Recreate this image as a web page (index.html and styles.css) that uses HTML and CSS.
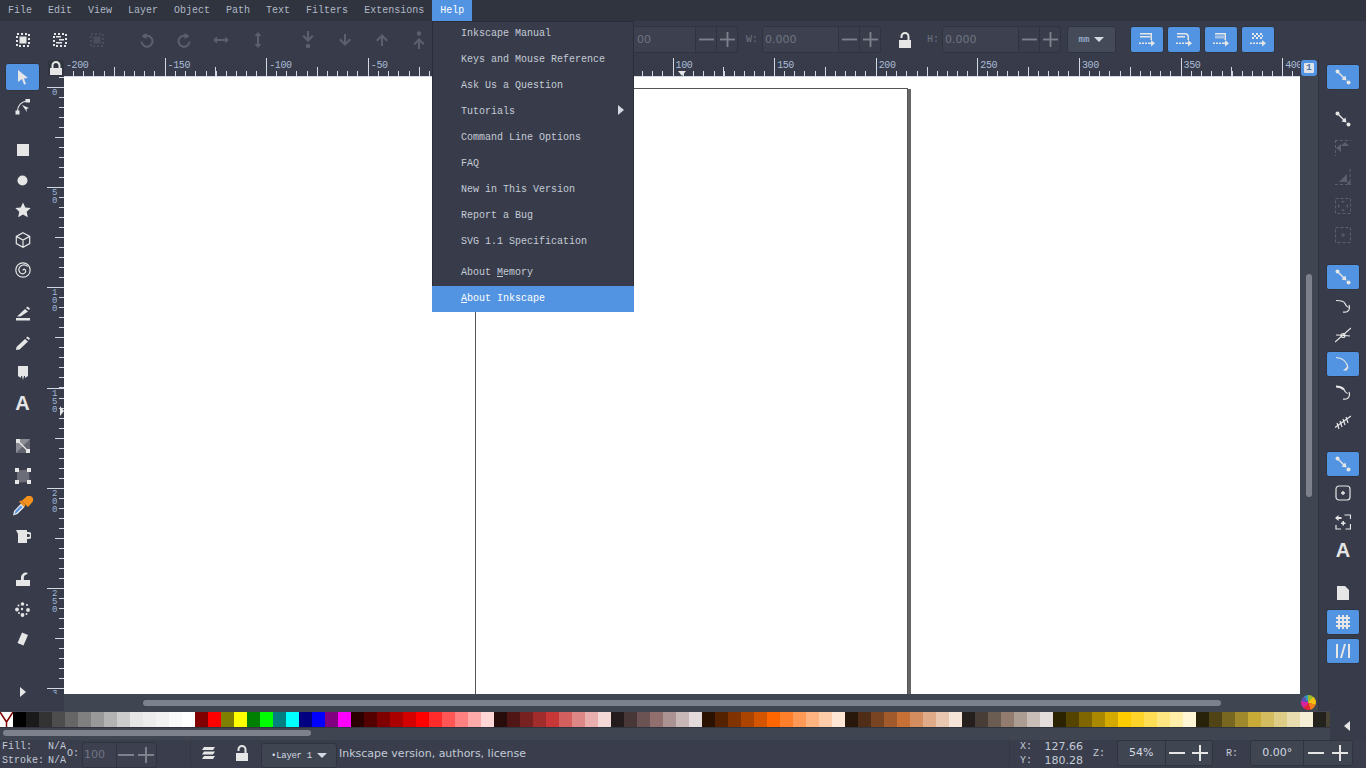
FILE: index.html
```html
<!DOCTYPE html>
<html lang="en">
<head>
  <meta charset="UTF-8">
  <title>Inkscape</title>
  <link rel="stylesheet" href="styles.css">
</head>
<body>
  <svg class="defs" width="0" height="0">
    <symbol id="minus" viewBox="0 0 16 16"><rect x="0" y="7" width="16" height="2"/></symbol>
    <symbol id="plus" viewBox="0 0 16 16"><rect x="0" y="7" width="16" height="2"/><rect x="7" y="0" width="2" height="16"/></symbol>
    <symbol id="lock-open" viewBox="0 0 16 16"><path d="M2 8h12v8H2zM10.500 8V4.500a2.500 2.500 0 0 0-5 0V6h-2V4.500a4.500 4.500 0 0 1 9 0V8z"/></symbol>
    <symbol id="snap-line" viewBox="0 0 16 16"><circle cx="2.500" cy="2.500" r="2"/><circle cx="13.500" cy="13.500" r="2"/><path d="M2 3l1-1 6 6 1.500-1.500 1 5-5-1L8 9z"/></symbol>
  </svg>

  <nav class="menubar">
    <span class="menu-title">File</span>
    <span class="menu-title">Edit</span>
    <span class="menu-title">View</span>
    <span class="menu-title">Layer</span>
    <span class="menu-title">Object</span>
    <span class="menu-title">Path</span>
    <span class="menu-title">Text</span>
    <span class="menu-title">Filters</span>
    <span class="menu-title">Extensions</span>
    <span class="menu-title menu-open">Help</span>
  </nav>

  <div class="menu">
    <div class="menu-item">Inkscape Manual</div>
    <div class="menu-item">Keys and Mouse Reference</div>
    <div class="menu-item">Ask Us a Question</div>
    <div class="menu-item">Tutorials<span class="submenu-arrow"></span></div>
    <div class="menu-item">Command Line Options</div>
    <div class="menu-item">FAQ</div>
    <div class="menu-item">New in This Version</div>
    <div class="menu-item">Report a Bug</div>
    <div class="menu-item">SVG 1.1 Specification</div>
    <div class="menu-sep"></div>
    <div class="menu-item">About <u>M</u>emory</div>
    <div class="menu-item menu-active"><u>A</u>bout Inkscape</div>
  </div>

  <header class="toolbar">
    <span class="cmd"><svg width="16" height="16" viewBox="0 0 16 16"><rect x="2" y="2" width="12" height="12" class="dots"/><rect x="4.500" y="4.500" width="7" height="7"/></svg></span>
    <span class="cmd"><svg width="16" height="16" viewBox="0 0 16 16"><rect x="2" y="2" width="12" height="12" class="dots"/><path d="M4 4h5v1.500H4zM7 7h5v1.500H7zM4 10h6v1.500H4z"/></svg></span>
    <span class="cmd off"><svg width="16" height="16" viewBox="0 0 16 16"><rect x="2" y="2" width="12" height="12" class="dots"/><rect x="4.500" y="4.500" width="7" height="7"/></svg></span>
    <span class="cmd off gap"><svg width="16" height="16" viewBox="0 0 16 16"><path d="M4.200 5.200A5.500 5.500 0 1 1 2.500 9.500" class="line"/><path d="M7.500 1v6L2.500 4z"/></svg></span>
    <span class="cmd off"><svg width="16" height="16" viewBox="0 0 16 16"><path d="M11.800 5.200A5.500 5.500 0 1 0 13.500 9.500" class="line"/><path d="M8.500 1v6l5-3z"/></svg></span>
    <span class="cmd off"><svg width="16" height="16" viewBox="0 0 16 16"><path d="M0 8l4-3.500v2.500h8V4.500L16 8l-4 3.500V9H4v2.500z"/></svg></span>
    <span class="cmd off"><svg width="16" height="16" viewBox="0 0 16 16"><path d="M8 0l3.500 4H9v8h2.500L8 16l-3.500-4H7V4H4.500z"/></svg></span>
    <span class="cmd off gap"><svg width="16" height="18" viewBox="0 0 16 18"><path d="M7 0h2v7l3-3 1.500 1.500L8 11 2.500 5.500 4 4l3 3z"/><circle cx="8" cy="15" r="2.200"/></svg></span>
    <span class="cmd off"><svg width="16" height="16" viewBox="0 0 16 16"><path d="M7 2h2v8l3.500-3.500L14 8l-6 6-6-6 1.500-1.500L7 10z"/></svg></span>
    <span class="cmd off"><svg width="16" height="16" viewBox="0 0 16 16"><path d="M7 14h2V6l3.500 3.500L14 8 8 2 2 8l1.500 1.500L7 6z"/></svg></span>
    <span class="cmd off"><svg width="16" height="18" viewBox="0 0 16 18"><circle cx="8" cy="2.500" r="2.200"/><path d="M7 18h2v-7l3 3 1.500-1.500L8 7l-5.500 5.500L4 14l3-3z"/></svg></span>

    <div class="spin-group first"><span class="spin-label"></span><span class="spin-field"></span><span class="spin-btn"><svg><use href="#minus"/></svg></span><span class="spin-btn"><svg><use href="#plus"/></svg></span></div>
    <div class="spin-group"><span class="spin-label"></span><span class="spin-field behind">00</span><span class="spin-btn"><svg><use href="#minus"/></svg></span><span class="spin-btn"><svg><use href="#plus"/></svg></span></div>
    <div class="spin-group"><span class="spin-label">W:</span><span class="spin-field">0.000</span><span class="spin-btn"><svg><use href="#minus"/></svg></span><span class="spin-btn"><svg><use href="#plus"/></svg></span></div>
    <svg class="size-lock" width="16" height="16"><use href="#lock-open"/></svg>
    <div class="spin-group tight"><span class="spin-label">H:</span><span class="spin-field">0.000</span><span class="spin-btn"><svg><use href="#minus"/></svg></span><span class="spin-btn"><svg><use href="#plus"/></svg></span></div>
    <div class="unit-combo">mm<span class="caret"></span></div>

    <div class="affect-btns">
      <span class="affect"><svg width="18" height="16" viewBox="0 0 18 16"><path d="M2 1h12v1.500H2zM2 4h10v1.500H2zM12.500 1H14v7h-1.500z"/><path d="M1 10.500h2v1.500H1zM4 10.500h2v1.500H4zM7 10.500h2v1.500H7zM10 10.500h3V8l4 3.200-4 3.300V12h-3z"/></svg></span>
      <span class="affect"><svg width="18" height="16" viewBox="0 0 18 16"><path d="M2 1h8a4 4 0 0 1 4 4v3h-1.500V5A2.500 2.500 0 0 0 10 2.500H2zM2 4h8v1.500H2z"/><path d="M1 10.500h2v1.500H1zM4 10.500h2v1.500H4zM7 10.500h2v1.500H7zM10 10.500h3V8l4 3.200-4 3.300V12h-3z"/></svg></span>
      <span class="affect"><svg width="18" height="16" viewBox="0 0 18 16"><path d="M3 1h11v1.500H3zM12.500 1H14v7h-1.500z"/><rect x="3" y="3.500" width="9" height="3" opacity=".55"/><path d="M1 10.500h2v1.500H1zM4 10.500h2v1.500H4zM7 10.500h2v1.500H7zM10 10.500h3V8l4 3.200-4 3.300V12h-3z"/></svg></span>
      <span class="affect"><svg width="18" height="16" viewBox="0 0 18 16"><path d="M3 1h2v2H3zM7 1h2v2H7zM11 1h2v2h-2zM5 3h2v2H5zM9 3h2v2H9zM13 3h1v2h-1zM3 5h2v2H3zM7 5h2v2H7zM11 5h2v2h-2z"/><path d="M1 10.500h2v1.500H1zM4 10.500h2v1.500H4zM7 10.500h2v1.500H7zM10 10.500h3V8l4 3.200-4 3.300V12h-3z"/></svg></span>
    </div>
  </header>

  <div class="middle">
    <aside class="toolbox">
      <span class="tool active"><svg width="16" height="16" viewBox="0 0 16 16"><path d="M3 1l10 8-4 .5 2 5.500-2 .5-2-5.500-4 3z"/></svg></span>
      <span class="tool"><svg width="16" height="16" viewBox="0 0 16 16"><path d="M10.500 0h4.500v3.500h-4.500zM.5 11.500h4V15.500h-4z"/><path d="M2.500 12Q3 4 11 2" class="line thin"/><path d="M7 6l7 3-2.500 1 .5 3z"/></svg></span>
      <span class="tool gap"><svg width="12" height="12" viewBox="0 0 12 12"><rect width="12" height="12"/></svg></span>
      <span class="tool"><svg width="11" height="11" viewBox="0 0 11 11"><circle cx="5.500" cy="5.500" r="5"/></svg></span>
      <span class="tool"><svg width="16" height="16" viewBox="0 0 16 16"><path d="M8 .5l2.300 5 5.400.6-4 3.700 1.100 5.400L8 12.500l-4.800 2.700 1.100-5.400-4-3.700 5.400-.6z"/></svg></span>
      <span class="tool"><svg width="16" height="16" viewBox="0 0 16 16"><path d="M8 .8l6.700 3.600v7.200L8 15.200l-6.700-3.600V4.400zM1.300 4.400L8 8l6.700-3.600M8 8v7.200" class="line thin"/></svg></span>
      <span class="tool"><svg width="16" height="16" viewBox="0 0 16 16"><circle cx="8" cy="8" r="7.200" class="line thin"/><path d="M8 8.500a1.200 1.200 0 0 1 1.500-1.300 2.200 2.200 0 0 1 .8 3.200 3.800 3.800 0 0 1-5.300.2 4.800 4.800 0 0 1 .3-6.300 5.800 5.800 0 0 1 7.400.2" class="line thin"/></svg></span>
      <span class="tool gap"><svg width="16" height="16" viewBox="0 0 16 16"><path d="M1 15.500v-2.500h14v2.500z"/><path d="M2 11.500L10 4l3 2.500-7.500 5z"/><path d="M11 3l1.500-1.500 2.500 2L14 5z"/></svg></span>
      <span class="tool"><svg width="16" height="16" viewBox="0 0 16 16"><path d="M1 15l.5-3L10 4l3 2.500-8.500 8z"/><path d="M11 3l1.500-1.500 2.500 2L14 5z"/></svg></span>
      <span class="tool"><svg width="12" height="16" viewBox="0 0 12 16"><path d="M1 1h10v10l-3 2v-2H7l-1 4-1-4H4v2l-3-2z"/></svg></span>
      <span class="tool letter">A</span>
      <span class="tool gap"><svg width="14" height="14" viewBox="0 0 14 14"><rect width="14" height="14" fill="#8a8d96"/><path d="M0 14L14 0v14z" fill="#62656f"/><rect width="4" height="4"/><rect x="10" y="10" width="4" height="4"/><path d="M3 3l8 8" class="line thin"/></svg></span>
      <span class="tool"><svg width="16" height="16" viewBox="0 0 16 16"><path d="M2 2.500L14 1.500 14.500 14 2 14.500z" fill="#6b6e78"/><rect x="0" y="0" width="4" height="4"/><rect x="12" y="0" width="4" height="4"/><rect x="0" y="12" width="4" height="4"/><rect x="12" y="12" width="4" height="4"/></svg></span>
      <span class="tool"><svg width="20" height="20" viewBox="0 0 20 20"><path d="M0 19.500l1-4.500 7-7.500 3.500 3.500-7 7z" fill="#e6e6e6"/><path d="M1.500 18l1-3 5.500-5.500 1.500 1.500-5.500 5.500z" fill="#5294e2"/><path d="M6 5.500l2-1 4.500 4.500-1 2z" fill="#f5921e"/><path d="M8.500 5L13 1a4 4 0 0 1 6 5.500L15 11z" fill="#f5921e"/></svg></span>
      <span class="tool"><svg width="16" height="16" viewBox="0 0 16 16"><path d="M1 2h11v13H3V6z"/><path d="M12 5h1.500a2 2 0 0 1 0 5H12" class="line"/></svg></span>
      <span class="tool gap"><svg width="16" height="16" viewBox="0 0 16 16"><path d="M1 15V9h5V7a5 5 0 0 1 7-5l-1.500 1.500C9 4 8.500 6 9 9h6v6z"/></svg></span>
      <span class="tool"><svg width="15" height="15" viewBox="0 0 15 15"><circle cx="7.500" cy="2" r="1.800"/><circle cx="3.500" cy="3.500" r="1"/><circle cx="12" cy="3" r="1"/><circle cx="2" cy="7.500" r="1.900"/><circle cx="13" cy="8" r="1.900"/><circle cx="7" cy="7" r="1.200"/><circle cx="4" cy="11" r="1"/><circle cx="7.500" cy="13" r="1.900"/><circle cx="11.500" cy="12" r="1"/></svg></span>
      <span class="tool"><svg width="12" height="14" viewBox="0 0 12 14"><path d="M5 .5l6 2.500-4.500 10.500L.5 11z"/></svg></span>
      <span class="tool expander"><svg width="6" height="10" viewBox="0 0 6 10"><path d="M0 0l6 5-6 5z"/></svg></span>
    </aside>

    <main class="workspace">
      <div class="ruler-corner"><svg width="14" height="14" viewBox="0 0 14 14"><path d="M1 7h12v7H1zM2.500 7V4.500a4.500 4.500 0 0 1 9 0V7h-2V4.500a2.500 2.500 0 0 0-5 0V7z"/></svg></div>
      <div class="hruler">
        <span class="hcell">-200</span><span class="hcell">-150</span><span class="hcell">-100</span><span class="hcell">-50</span><span class="hcell"></span><span class="hcell"></span><span class="hcell">100</span><span class="hcell">150</span><span class="hcell">200</span><span class="hcell">250</span><span class="hcell">300</span><span class="hcell">350</span><span class="hcell">400</span>
        <span class="hmark"></span>
      </div>
      <div class="page-badge"><span>1</span></div>
      <div class="vruler">
        <span class="vcell"></span><span class="vcell">0</span><span class="vcell">5<br>0</span><span class="vcell">1<br>0<br>0</span><span class="vcell">1<br>5<br>0</span><span class="vcell">2<br>0<br>0</span><span class="vcell">2<br>5<br>0</span><span class="vcell">3</span>
        <span class="vmark"></span>
      </div>
      <div class="canvas"><div class="page"></div></div>
      <div class="vscroll"><span class="vthumb"></span></div>
      <div class="hscroll-pad"></div>
      <div class="hscroll"><span class="hthumb"></span></div>
      <div class="wheel-btn"><span class="wheel"></span></div>
    </main>

    <aside class="snapbar">
      <span class="snap on"><svg width="16" height="16"><use href="#snap-line"/></svg></span>
      <span class="snap gap"><svg width="16" height="16"><use href="#snap-line"/></svg></span>
      <span class="snap dim"><svg width="16" height="16" viewBox="0 0 16 16"><path d="M0 .5h16M.5 0v16" class="line dash"/><path d="M6 6h8L10 2zM1 8l5-4v8z"/></svg></span>
      <span class="snap dim"><svg width="16" height="16" viewBox="0 0 16 16"><path d="M0 15.500h16M15 0v16" class="line dash"/><path d="M4 13L12 5v8z"/><rect x="12.500" y="12.500" width="3" height="3"/></svg></span>
      <span class="snap dim"><svg width="16" height="16" viewBox="0 0 16 16"><rect x=".5" y=".5" width="15" height="15" class="line dash"/><path d="M6 3h4L8 5zM6 13h4l-2-2zM3 6v4l2-2zM13 6v4l-2-2z"/></svg></span>
      <span class="snap dim"><svg width="16" height="16" viewBox="0 0 16 16"><rect x=".5" y=".5" width="15" height="15" class="line dash"/><path d="M7.500 6h1v1.500H10v1H8.500V10h-1V8.500H6v-1h1.500z"/></svg></span>

      <span class="snap on gap"><svg width="16" height="16"><use href="#snap-line"/></svg></span>
      <span class="snap"><svg width="16" height="16" viewBox="0 0 16 16"><path d="M1 2.500q8 0 9 3 1 3 3.500 4" class="line thin"/><path d="M14 7q1.500 4-1.500 6.500-2 1-4.500.5" class="line thin"/></svg></span>
      <span class="snap"><svg width="16" height="16" viewBox="0 0 16 16"><path d="M0 15L16 1M1 8q6 0 14 1" class="line thin"/><circle cx="8" cy="8.500" r="2" class="line thin"/></svg></span>
      <span class="snap on"><svg width="16" height="16" viewBox="0 0 16 16"><path d="M1 1.500q11 1 12 11" class="line thin"/><path d="M12 14.500h-4l5-4.500z"/></svg></span>
      <span class="snap"><svg width="16" height="16" viewBox="0 0 16 16"><path d="M1 1.500q5 0 8 3" class="line"/><path d="M14 7q1.500 4-1.500 6.500-2 1-4.500.5M9 4.500q1 3 3.500 4" class="line thin"/></svg></span>
      <span class="snap"><svg width="16" height="16" viewBox="0 0 16 16"><path d="M0 13.500L16 2" class="line thin"/><path d="M2 9l2 6M5 7l2 6M8 5l2 6M11 3l2 6" class="line thin"/></svg></span>

      <span class="snap on gap"><svg width="16" height="16"><use href="#snap-line"/></svg></span>
      <span class="snap"><svg width="16" height="16" viewBox="0 0 16 16"><rect x="1" y="1" width="14" height="14" rx="3" class="line thin"/><path d="M7.300 6h1.400v1.300H10v1.400H8.700V10H7.300V8.700H6V7.300h1.300z"/></svg></span>
      <span class="snap"><svg width="16" height="16" viewBox="0 0 16 16"><path d="M9.500 1h6v4M15.500 10v5h-5M6 15H1v-4" class="line thin"/><path d="M0 4l3.500-3v2h3v2h-3v2z"/><path d="M7.500 7h1.500v1.500h1.500V10H9v1.500H7.500V10H6V8.500h1.500z"/></svg></span>
      <span class="snap letter">A</span>

      <span class="snap gap"><svg width="12" height="14" viewBox="0 0 12 14"><path d="M0 0h8l4 4v10H0z"/></svg></span>
      <span class="snap on"><svg width="16" height="16" viewBox="0 0 16 16"><path d="M4 1v14M8 1v14M12 1v14M1 4h14M1 8h14M1 12h14" class="line"/></svg></span>
      <span class="snap on"><svg width="16" height="16" viewBox="0 0 16 16"><path d="M1 1h2v14H1zM13 1h2v14h-2zM9 1h2l-4 14H5z"/></svg></span>
    </aside>
  </div>

  <div class="palette-row">
    <div class="palette-col">
      <div class="swatches">
        <span class="swatch none"><svg width="13" height="15" viewBox="0 0 13 15"><path d="M0 0l6.500 10L13 0M6.500 10V15" fill="none" stroke="#800000" stroke-width="1.500"/></svg></span><span class="swatch" style="background:#000000"></span><span class="swatch" style="background:#1a1a1a"></span><span class="swatch" style="background:#333333"></span><span class="swatch" style="background:#4d4d4d"></span><span class="swatch" style="background:#666666"></span><span class="swatch" style="background:#808080"></span><span class="swatch" style="background:#999999"></span><span class="swatch" style="background:#b3b3b3"></span><span class="swatch" style="background:#cccccc"></span><span class="swatch" style="background:#e6e6e6"></span><span class="swatch" style="background:#ececec"></span><span class="swatch" style="background:#f2f2f2"></span><span class="swatch" style="background:#f9f9f9"></span><span class="swatch" style="background:#ffffff"></span>
        <span class="swatch" style="background:#800000"></span><span class="swatch" style="background:#ff0000"></span><span class="swatch" style="background:#808000"></span><span class="swatch" style="background:#ffff00"></span><span class="swatch" style="background:#008000"></span><span class="swatch" style="background:#00ff00"></span><span class="swatch" style="background:#008080"></span><span class="swatch" style="background:#00ffff"></span><span class="swatch" style="background:#000080"></span><span class="swatch" style="background:#0000ff"></span><span class="swatch" style="background:#800080"></span><span class="swatch" style="background:#ff00ff"></span>
        <span class="swatch" style="background:#2b0000"></span><span class="swatch" style="background:#550000"></span><span class="swatch" style="background:#800000"></span><span class="swatch" style="background:#aa0000"></span><span class="swatch" style="background:#d40000"></span><span class="swatch" style="background:#ff0000"></span><span class="swatch" style="background:#ff2a2a"></span><span class="swatch" style="background:#ff5555"></span><span class="swatch" style="background:#ff8080"></span><span class="swatch" style="background:#ffaaaa"></span><span class="swatch" style="background:#ffd5d5"></span>
        <span class="swatch" style="background:#280b0b"></span><span class="swatch" style="background:#501616"></span><span class="swatch" style="background:#782121"></span><span class="swatch" style="background:#a02c2c"></span><span class="swatch" style="background:#c83737"></span><span class="swatch" style="background:#d35f5f"></span><span class="swatch" style="background:#de8787"></span><span class="swatch" style="background:#e9afaf"></span><span class="swatch" style="background:#f4d7d7"></span>
        <span class="swatch" style="background:#241c1c"></span><span class="swatch" style="background:#483737"></span><span class="swatch" style="background:#6c5353"></span><span class="swatch" style="background:#916f6f"></span><span class="swatch" style="background:#ac9393"></span><span class="swatch" style="background:#c8b7b7"></span><span class="swatch" style="background:#e3dbdb"></span>
        <span class="swatch" style="background:#2b1100"></span><span class="swatch" style="background:#552200"></span><span class="swatch" style="background:#803300"></span><span class="swatch" style="background:#aa4400"></span><span class="swatch" style="background:#d45500"></span><span class="swatch" style="background:#ff6600"></span><span class="swatch" style="background:#ff7f2a"></span><span class="swatch" style="background:#ff9955"></span><span class="swatch" style="background:#ffb380"></span><span class="swatch" style="background:#ffccaa"></span><span class="swatch" style="background:#ffe6d5"></span>
        <span class="swatch" style="background:#28170b"></span><span class="swatch" style="background:#502d16"></span><span class="swatch" style="background:#784421"></span><span class="swatch" style="background:#a05a2c"></span><span class="swatch" style="background:#c87137"></span><span class="swatch" style="background:#d38d5f"></span><span class="swatch" style="background:#deaa87"></span><span class="swatch" style="background:#e9c6af"></span><span class="swatch" style="background:#f4e3d7"></span>
        <span class="swatch" style="background:#241f1c"></span><span class="swatch" style="background:#483e37"></span><span class="swatch" style="background:#6c5d53"></span><span class="swatch" style="background:#917c6f"></span><span class="swatch" style="background:#ac9d93"></span><span class="swatch" style="background:#c8beb7"></span><span class="swatch" style="background:#e3dedb"></span>
        <span class="swatch" style="background:#2b2200"></span><span class="swatch" style="background:#554400"></span><span class="swatch" style="background:#806600"></span><span class="swatch" style="background:#aa8800"></span><span class="swatch" style="background:#d4aa00"></span><span class="swatch" style="background:#ffcc00"></span><span class="swatch" style="background:#ffd42a"></span><span class="swatch" style="background:#ffdd55"></span><span class="swatch" style="background:#ffe680"></span><span class="swatch" style="background:#ffeeaa"></span><span class="swatch" style="background:#fff6d5"></span>
        <span class="swatch" style="background:#28220b"></span><span class="swatch" style="background:#504416"></span><span class="swatch" style="background:#786721"></span><span class="swatch" style="background:#a0892c"></span><span class="swatch" style="background:#c8ab37"></span><span class="swatch" style="background:#d3bc5f"></span><span class="swatch" style="background:#decd87"></span><span class="swatch" style="background:#e9ddaf"></span><span class="swatch" style="background:#f4eed7"></span>
        <span class="swatch" style="background:#24221c"></span><span class="swatch" style="background:#484537"></span>
      </div>
      <div class="palette-scroll"><span class="palette-thumb"></span></div>
    </div>
    <div class="palette-menu"><svg width="6" height="10" viewBox="0 0 6 10"><path d="M6 0L0 5l6 5z"/></svg></div>
  </div>

  <footer class="statusbar">
    <div class="style-info">
      <span>Fill:</span><span>N/A</span>
      <span>Stroke:</span><span>N/A</span>
    </div>
    <span class="opacity-label">O:</span>
    <div class="status-spin disabled">
      <span class="status-value opacity-value">100</span>
      <span class="status-btns"><svg><use href="#minus"/></svg><svg><use href="#plus"/></svg></span>
    </div>
    <span class="status-sep"></span>
    <svg class="layers-icon" width="16" height="14" viewBox="0 0 16 14"><path d="M3 1h11l-2 3H1zM3 5.500h11l-2 3H1zM3 10h11l-2 3H1z"/></svg>
    <svg class="layer-lock" width="16" height="16"><use href="#lock-open"/></svg>
    <div class="layer-combo">•Layer 1<span class="caret"></span></div>
    <span class="status-msg">Inkscape version, authors, license</span>
    <span class="status-sep right"></span>
    <div class="coords">
      <span>X:</span><span class="coord-val">127.66</span>
      <span>Y:</span><span class="coord-val">180.28</span>
    </div>
    <span class="zoom-label">Z:</span>
    <div class="status-spin zoom">
      <span class="status-value">54%</span>
      <span class="status-btns"><svg><use href="#minus"/></svg><svg><use href="#plus"/></svg></span>
    </div>
    <span class="rot-label">R:</span>
    <div class="status-spin rot">
      <span class="status-value">0.00°</span>
      <span class="status-btns"><svg><use href="#minus"/></svg><svg><use href="#plus"/></svg></span>
    </div>
  </footer>
</body>
</html>
```

FILE: styles.css
```css
* {
  box-sizing: border-box;
}
html, body {
  height: 100%;
}
body {
  margin: 0;
  height: 768px;
  overflow: hidden;
  display: flex;
  flex-direction: column;
  position: relative;
  background: #383c4a;
  color: #d3dae3;
  font-family: "Liberation Mono", monospace;
  font-size: 10px;
}
svg {
  fill: #e6e6e6;
  display: block;
}
.defs {
  position: absolute;
}
.line {
  fill: none;
  stroke: #e6e6e6;
  stroke-width: 2;
}
.thin {
  stroke-width: 1.200;
}
.dash {
  stroke-width: 1;
  stroke-dasharray: 3 2;
}
.dots {
  fill: none;
  stroke: #e6e6e6;
  stroke-width: 2;
  stroke-dasharray: 2 2;
}

/* menu bar */
.menubar {
  height: 21px;
  flex: none;
  display: flex;
  background: #2f343f;
  color: #afb8c6;
  line-height: 22px;
}
.menu-title {
  padding: 0 8px;
}
.menu-open {
  background: #5294e2;
  color: #fff;
}
.menu {
  position: absolute;
  left: 432px;
  top: 21px;
  width: 202px;
  z-index: 10;
  background: #383c4a;
  border-left: 1px solid #2b2e39;
  border-right: 1px solid #2b2e39;
  box-shadow: inset 0 1px #2b2e39;
  color: #c3cbd7;
}
.menu-item {
  height: 26px;
  padding-left: 28px;
  line-height: 25px;
  position: relative;
}
.menu-sep {
  height: 5px;
}
.menu-active {
  background: #5294e2;
  color: #fff;
  margin: 0 -1px;
  padding-left: 29px;
}
.submenu-arrow {
  position: absolute;
  right: 9px;
  top: 6px;
  border-left: 6px solid #d3dae3;
  border-top: 5px solid transparent;
  border-bottom: 5px solid transparent;
}

/* top toolbar */
.toolbar {
  height: 37px;
  flex: none;
  display: flex;
  align-items: center;
  padding-left: 4px;
}
.cmd {
  width: 37px;
  height: 30px;
  flex: none;
  display: flex;
  align-items: center;
  justify-content: center;
}
.cmd.gap {
  margin-left: 13px;
}
.cmd.off svg {
  fill: #5c606e;
}
.cmd.off .line, .cmd.off .dots {
  stroke: #5c606e;
}
.cmd.off:nth-child(3) svg {
  fill: #4a4e5c;
}
.cmd.off:nth-child(3) .dots {
  stroke: #4a4e5c;
}
.spin-group {
  display: flex;
  align-items: center;
  height: 27px;
  margin-left: 8px;
  flex: none;
}
.spin-group.first {
  margin-left: 23px;
}
.spin-group.tight {
  margin-left: 0;
}
.spin-group.tight .spin-label {
  width: 15px;
}
.spin-label {
  width: 16px;
  color: #6f7482;
}
.spin-field {
  width: 77px;
  height: 27px;
  padding-left: 2px;
  line-height: 25px;
  background: #3d414f;
  border: 1px solid #2f343f;
  border-radius: 3px 0 0 3px;
  color: #6f7482;
  font-family: "DejaVu Sans", sans-serif;
  font-size: 11px;
}
.spin-field.behind {
  padding-left: 17px;
}
.spin-btn {
  width: 21px;
  height: 27px;
  display: flex;
  align-items: center;
  justify-content: center;
  background: #3a3e4c;
  border: 1px solid #2f343f;
  border-left: 0;
}
.spin-btn:last-child {
  border-radius: 0 3px 3px 0;
}
.spin-btn svg {
  width: 15px;
  height: 15px;
  fill: #7c818c;
}
.size-lock {
  margin: 0 14px 0 16px;
  flex: none;
}
.unit-combo {
  width: 49px;
  height: 27px;
  margin-left: 6px;
  flex: none;
  display: flex;
  align-items: center;
  justify-content: center;
  gap: 5px;
  background: #444a58;
  border: 1px solid #2f343f;
  border-radius: 3px;
  color: #a9c1e3;
  font-size: 9px;
}
.caret {
  border-top: 5px solid #d3dae3;
  border-left: 5px solid transparent;
  border-right: 5px solid transparent;
}
.affect-btns {
  display: flex;
  gap: 3px;
  margin-left: 14px;
}
.affect {
  width: 34px;
  height: 27px;
  display: flex;
  align-items: center;
  justify-content: center;
  background: #5294e2;
  border: 1px solid #2f343f;
  border-radius: 3px;
}

/* middle */
.middle {
  flex: 1;
  display: flex;
  min-height: 0;
}
.toolbox {
  width: 46px;
  flex: none;
  display: flex;
  flex-direction: column;
  padding: 4px 0 4px 5px;
}
.tool {
  width: 35px;
  height: 30px;
  flex: none;
  display: flex;
  align-items: center;
  justify-content: center;
}
.tool.active {
  height: 28px;
  margin: 1px 0;
  background: #5294e2;
  border: 1px solid #2f343f;
  border-radius: 3px;
}
.tool.gap {
  margin-top: 13px;
}
.letter {
  color: #e6e6e6;
  font-family: "Liberation Sans", sans-serif;
  font-weight: bold;
  font-size: 20px;
}
.expander {
  margin-top: auto;
}

.workspace {
  flex: 1;
  min-width: 0;
  display: grid;
  grid-template-columns: 18px 1fr 18px;
  grid-template-rows: 18px 1fr 17px;
}
.ruler-corner {
  margin: 2px 0 0 2px;
  display: flex;
  align-items: center;
  justify-content: center;
  background: #2f343f;
  border-radius: 3px;
}
.hruler {
  position: relative;
  overflow: hidden;
  display: flex;
  color: #a8bbd6;
  font-size: 10px;
  letter-spacing: -0.4px;
}
.hcell {
  width: 101.600px;
  flex: none;
  padding: 0 0 0 3px;
  line-height: 15px;
  background:
    linear-gradient(#d3dae3, #d3dae3) 0 0 / 1px 100% no-repeat,
    linear-gradient(#d3dae3, #d3dae3) 50.800px 100% / 1px 9px no-repeat,
    repeating-linear-gradient(90deg, #d3dae3 0 1px, transparent 1px 10.160px) 0 100% / 100% 5px no-repeat;
}
.hcell:first-child {
  margin-left: -1px;
}
.hmark {
  position: absolute;
  left: 614px;
  bottom: 0;
  border-top: 5px solid #e6e6e6;
  border-left: 4px solid transparent;
  border-right: 4px solid transparent;
}
.page-badge {
  margin: 2px 1px 0;
  display: flex;
  align-items: center;
  justify-content: center;
  background: #5294e2;
  border-radius: 3px;
}
.page-badge span {
  width: 10px;
  height: 10px;
  background: #dfe3e9;
  border-radius: 1px;
  color: #4a6fa0;
  font-weight: bold;
  font-size: 9px;
  line-height: 10px;
  text-align: center;
}
.vruler {
  position: relative;
  overflow: hidden;
  color: #9db6d8;
  font-size: 9px;
}
.vcell {
  display: block;
  height: 100.200px;
  padding: 2px 0 0 6px;
  line-height: 8px;
  background:
    linear-gradient(#d3dae3, #d3dae3) 100% 0 / 17px 1px no-repeat,
    linear-gradient(#d3dae3, #d3dae3) 100% 50.100px / 9px 1px no-repeat,
    repeating-linear-gradient(180deg, #d3dae3 0 1px, transparent 1px 10.020px) 100% 0 / 5px 100% no-repeat;
}
.vcell:first-child {
  margin-top: -89.200px;
}
.vmark {
  position: absolute;
  right: 0;
  top: 330px;
  border-left: 4px solid #e6e6e6;
  border-top: 5px solid transparent;
  border-bottom: 5px solid transparent;
}
.canvas {
  position: relative;
  overflow: hidden;
  background: #fff;
  border-top: 1px solid #d3dae3;
}
.page {
  position: absolute;
  left: 411px;
  top: 11px;
  width: 433px;
  height: 700px;
  border: 1px solid #555;
  box-shadow: 3px 1px 0 #666;
}
.vscroll {
  position: relative;
  background: #404552;
  display: flex;
  justify-content: center;
  padding-top: 198px;
}
.vthumb {
  width: 6px;
  height: 223px;
  border-radius: 3px;
  background: #7c818c;
}
.hscroll-pad {
  background: #383c4a;
}
.hscroll {
  background: #404552;
  padding: 6px 0 0 79px;
}
.hthumb {
  display: block;
  width: 1078px;
  height: 6px;
  border-radius: 3px;
  background: #7c818c;
}
.wheel-btn {
  background: #404552;
  padding: 1px 2px 0 1px;
}
.wheel-btn .wheel {
  display: block;
  width: 15px;
  height: 15px;
  border-radius: 50%;
  background: conic-gradient(#9bbb2e 0 12%, #f5c211 12% 30%, #ef7f1a 30% 45%, #e5243b 45% 62%, #d6249f 62% 78%, #5b4fb5 78% 90%, #2d9bb5 90%);
}
.snapbar {
  width: 48px;
  flex: none;
  display: flex;
  flex-direction: column;
  align-items: center;
  padding-top: 4px;
  border-left: 1px solid #2f343f;
}
.snap {
  width: 34px;
  height: 29px;
  flex: none;
  display: flex;
  align-items: center;
  justify-content: center;
  margin-left: 1px;
}
.snap.on {
  height: 26px;
  margin-top: 2px;
  margin-bottom: 1px;
  background: #5294e2;
  border: 1px solid #2f343f;
  border-radius: 3px;
}
.snap.gap {
  margin-top: 13px;
}
.snap.on.gap {
  margin-top: 15px;
}
.snap.dim svg {
  fill: #5c606e;
}
.snap.dim .line {
  stroke: #5c606e;
}

/* palette */
.palette-row {
  height: 29px;
  flex: none;
  display: flex;
}
.palette-col {
  width: 1330px;
  flex: none;
  background: #404552;
  padding-top: 1px;
}
.swatches {
  display: flex;
  height: 16px;
  overflow: hidden;
  border-bottom: 1px solid #2f343f;
}
.swatch {
  width: 13px;
  height: 15px;
  flex: none;
}
.none {
  background: #fff;
}
.palette-scroll {
  height: 12px;
  padding: 2px 0 0 3px;
}
.palette-thumb {
  display: block;
  width: 308px;
  height: 6px;
  border-radius: 3px;
  background: #7c818c;
}
.palette-menu {
  flex: 1;
  display: flex;
  padding: 10px 0 0 14px;
}

/* status bar */
.statusbar {
  height: 28px;
  flex: none;
  display: flex;
  align-items: center;
  padding-bottom: 2px;
  background: #3a3e4c;
}
.style-info {
  width: 67px;
  flex: none;
  padding-left: 2px;
  display: grid;
  grid-template-columns: 46px 1fr;
  row-gap: 3px;
  line-height: 11px;
  color: #c3cbd7;
}
.opacity-label {
  width: 15px;
  flex: none;
  color: #c3cbd7;
}
.status-spin {
  height: 26px;
  flex: none;
  display: flex;
  background: #404552;
  border: 1px solid #2f343f;
  border-radius: 3px;
  font-family: "DejaVu Sans", sans-serif;
  font-size: 11px;
}
.status-value {
  line-height: 24px;
  text-align: center;
}
.status-btns {
  display: flex;
  align-items: center;
  justify-content: space-around;
  border-left: 1px solid #2f343f;
}
.status-btns svg {
  width: 16px;
  height: 16px;
}
.status-spin.disabled {
  width: 75px;
  margin-top: 4px;
  background: #3d414f;
  color: #6f7482;
}
.status-spin.disabled svg {
  fill: #7c818c;
}
.opacity-value {
  width: 33px;
  padding-left: 1px;
  text-align: left;
}
.disabled .status-btns {
  width: 41px;
}
.status-sep {
  width: 1px;
  height: 28px;
  margin-left: 33px;
  flex: none;
  background: #343845;
}
.status-sep.right {
  margin-left: 0;
}
.layers-icon {
  margin-left: 10px;
  flex: none;
}
.layer-lock {
  margin-left: 17px;
  flex: none;
}
.layer-combo {
  width: 76px;
  height: 25px;
  margin: 5px 0 0 11px;
  flex: none;
  display: flex;
  align-items: center;
  justify-content: center;
  gap: 5px;
  background: #404552;
  border: 1px solid #2f343f;
  border-radius: 3px;
  font-size: 9px;
  letter-spacing: -0.3px;
}
.status-msg {
  flex: 1;
  margin-left: 2px;
  color: #c3cbd7;
  font-family: "DejaVu Sans", sans-serif;
  font-size: 11px;
}
.coords {
  width: 63px;
  margin-left: 10px;
  flex: none;
  display: grid;
  grid-template-columns: 20px 1fr;
  row-gap: 1px;
  line-height: 13px;
  color: #c3cbd7;
}
.coord-val {
  text-align: right;
  font-family: "DejaVu Sans", sans-serif;
  font-size: 11px;
}
.zoom-label {
  width: 24px;
  margin-left: 10px;
  flex: none;
  color: #c3cbd7;
}
.status-spin.zoom {
  width: 96px;
}
.zoom .status-value {
  width: 47px;
}
.zoom .status-btns {
  width: 48px;
}
.rot-label {
  width: 24px;
  margin-left: 13px;
  flex: none;
  color: #c3cbd7;
}
.status-spin.rot {
  width: 103px;
  margin-right: 13px;
}
.rot .status-value {
  width: 53px;
}
.rot .status-btns {
  width: 49px;
}
```
